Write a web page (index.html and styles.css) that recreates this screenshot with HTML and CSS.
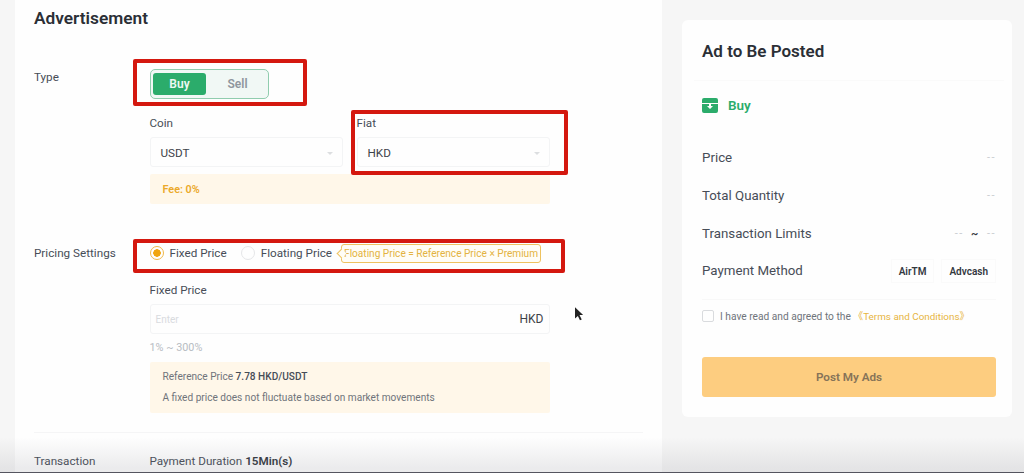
FILE: index.html
```html
<!DOCTYPE html>
<html lang="en">
<head>
<meta charset="utf-8">
<title>Post Ad</title>
<link rel="stylesheet" href="styles.css">
</head>
<body>
<div class="page">
  <main class="panel">
    <h1 class="panel-title">Advertisement</h1>
    <section class="row row-type">
      <div class="row-label">Type</div>
      <div class="row-body">
        <div class="toggle">
          <span class="toggle-on">Buy</span>
          <span class="toggle-off">Sell</span>
        </div>
        <div class="selects">
          <div class="field">
            <div class="field-label">Coin</div>
            <div class="select"><span>USDT</span><i class="caret"></i></div>
          </div>
          <div class="field">
            <div class="field-label">Fiat</div>
            <div class="select"><span>HKD</span><i class="caret"></i></div>
          </div>
        </div>
        <div class="notice notice-fee">Fee: 0%</div>
      </div>
    </section>
    <section class="row row-pricing">
      <div class="row-label">Pricing Settings</div>
      <div class="row-body">
        <div class="radios">
          <span class="radio radio-on"></span><span class="radio-text">Fixed Price</span>
          <span class="radio"></span><span class="radio-text radio-text-last">Floating Price</span>
          <span class="hint">Floating Price = Reference Price × Premium</span>
        </div>
        <div class="field-label field-label-price">Fixed Price</div>
        <div class="input"><span class="placeholder">Enter</span><span class="unit">HKD</span></div>
        <div class="range">1% ~ 300%</div>
        <div class="notice notice-ref">
          <div>Reference Price <b>7.78 HKD/USDT</b></div>
          <div>A fixed price does not fluctuate based on market movements</div>
        </div>
      </div>
    </section>
    <section class="row row-transaction">
      <div class="row-label">Transaction</div>
      <div class="row-body">Payment Duration <b>15Min(s)</b></div>
    </section>
  </main>
  <aside class="card">
    <h2 class="card-title">Ad to Be Posted</h2>
    <div class="side">
      <svg class="side-icon" viewBox="0 0 16 15" aria-hidden="true"><path fill="#2bac6b" d="M2 0h12a2 2 0 0 1 2 2v3H0V2a2 2 0 0 1 2-2zM0 6h16v7a2 2 0 0 1-2 2H2a2 2 0 0 1-2-2z"/><path fill="#fff" d="M7 5h2v3h2l-3 3-3-3h2z"/></svg>
      <span>Buy</span>
    </div>
    <div class="line"><span>Price</span><span class="dash">--</span></div>
    <div class="line"><span>Total Quantity</span><span class="dash">--</span></div>
    <div class="line"><span>Transaction Limits</span><span class="dash">-- <b>~</b> --</span></div>
    <div class="line line-pay">
      <span>Payment Method</span>
      <span class="tags"><span class="tag">AirTM</span><span class="tag">Advcash</span></span>
    </div>
    <label class="agree">
      <span class="check"></span>
      <span>I have read and agreed to the <span class="terms">《Terms and Conditions》</span></span>
    </label>
    <div class="post">Post My Ads</div>
  </aside>
</div>
<div class="mark mark-type"></div>
<div class="mark mark-fiat"></div>
<div class="mark mark-pricing"></div>
<svg class="cursor" viewBox="0 0 10 15" aria-hidden="true"><path fill="#222" d="M0 0l9 8.500-4 .2 2.500 4.800-2 1-2.300-4.900L0 12.500z"/></svg>
<div class="shade"></div>
</body>
</html>
```
FILE: styles.css
```css
* { box-sizing: border-box; }
html, body { margin: 0; height: 100%; overflow: hidden; }
body {
  position: relative;
  background: #f6f6f6;
  color: #474d57;
  font-family: Roboto, "Noto Sans CJK SC", "Liberation Sans", sans-serif;
  font-size: 11.700px;
}
b { font-weight: 600; color: #33383f; }
.page { display: flex; align-items: flex-start; padding-left: 15px; height: 473px; }

.panel {
  width: 647px;
  height: 473px;
  flex: none;
  background: #fefefe;
  padding: 0 19px;
  overflow: hidden;
}
.panel-title {
  margin: 8px 0 0;
  font-size: 17.300px;
  line-height: 20px;
  font-weight: 600;
  color: #2b2f36;
}
.row { display: flex; }
.row-label { width: 115.500px; flex: none; line-height: 16px; }
.row-body { width: 400px; }
.row-type { margin-top: 41px; }
.row-pricing { margin-top: 41px; }

.toggle {
  display: flex;
  align-items: center;
  width: 119px;
  height: 30px;
  padding: 2px;
  border: 1px solid #90cdae;
  border-radius: 5px;
  background: #f1f8f5;
  font-weight: 600;
  font-size: 12px;
}
.toggle-on {
  width: 53px;
  height: 22px;
  padding-left: 1px;
  line-height: 22px;
  text-align: center;
  border-radius: 3px;
  background: #2bac6b;
  color: #eef8f3;
}
.toggle-off { flex: 1; padding-left: 4px; text-align: center; color: #8f969e; }

.selects { display: flex; gap: 14px; margin-top: 15px; }
.field { flex: 1; }
.field-label { line-height: 18px; margin-bottom: 5px; }
.select, .input {
  display: flex;
  align-items: center;
  justify-content: space-between;
  height: 30px;
  border: 1px solid #f3f4f5;
  border-radius: 3px;
  padding: 2px 9px 0 10px;
  color: #3d4249;
}
.caret {
  width: 0;
  height: 0;
  border: 3px solid transparent;
  border-top: 3px solid #dcdee0;
  border-bottom: 0;
}
.notice { background: #fff7e9; border-radius: 2px; }
.notice-fee {
  height: 30px;
  margin-top: 7px;
  padding: 1px 13px 0;
  line-height: 29px;
  font-size: 10.800px;
  font-weight: 600;
  color: #eba92a;
}

.radios { display: flex; align-items: center; height: 16px; }
.radio {
  width: 14px;
  height: 14px;
  border: 1px solid #e5e6e8;
  border-radius: 50%;
  flex: none;
}
.radio-on { border-color: #efb84a; background: radial-gradient(circle, #f0a50f 0 3.500px, #fff 4px); }
.radio-text { margin: 0 14px 0 6px; }
.radio-text-last { margin-right: 9px; }
.hint {
  position: relative;
  height: 19px;
  line-height: 17px;
  padding: 0 2px;
  border: 1px solid #eec25f;
  border-radius: 3px;
  background: #fffdf6;
  color: #e3b341;
  font-size: 10.100px;
  white-space: nowrap;
}
.hint::before {
  content: "";
  position: absolute;
  left: -4px;
  top: 5px;
  width: 6px;
  height: 6px;
  border-left: 1px solid #eec25f;
  border-bottom: 1px solid #eec25f;
  background: #fffdf6;
  transform: rotate(45deg);
}
.field-label-price { margin-top: 20px; }
.input { padding: 0 5px 0 5px; }
.placeholder { color: #d9dbde; font-size: 10px; }
.unit { font-size: 12px; }
.range { margin-top: 7px; font-size: 10.800px; line-height: 13px; color: #b7bcc2; }
.notice-ref {
  height: 51px;
  margin-top: 8px;
  padding: 4px 13px 0;
  font-size: 10.100px;
  line-height: 21px;
  color: #6f747b;
}
.notice-ref b { font-weight: 500; color: #474d57; }
.row-transaction {
  margin-top: 19px;
  padding-top: 20px;
  border-top: 1px solid #f5f5f6;
  line-height: 16px;
}

.card {
  width: 330px;
  height: 397px;
  flex: none;
  margin: 20px 0 0 20px;
  padding: 0 16px 0 20px;
  background: #fefefe;
  border-radius: 6px;
}
.card-title {
  margin: 0 -8px;
  padding: 21px 8px 0;
  height: 61px;
  font-size: 17px;
  line-height: 20px;
  font-weight: 600;
  color: #2b2f36;
  border-bottom: 1px solid #fafafa;
}
.side {
  display: flex;
  align-items: center;
  gap: 10px;
  margin-top: 14px;
  height: 20px;
  font-size: 13.500px;
  font-weight: 600;
  color: #2bac6b;
}
.side-icon { width: 16px; height: 15px; }
.line {
  display: flex;
  justify-content: space-between;
  align-items: center;
  height: 20px;
  margin-top: 18px;
  font-size: 13.300px;
}
.side + .line { margin-top: 32px; }
.dash { font-size: 11px; letter-spacing: 1.500px; word-spacing: 3px; color: #c9ccd0; }
.dash b { color: #33383f; }
.line-pay { margin-top: 17px; margin-bottom: 19px; }
.tags { display: flex; gap: 7px; padding-top: 2px; }
.tag {
  height: 24px;
  line-height: 24px;
  padding: 0 7px;
  border: 1px solid #fafafa;
  font-size: 10px;
  font-weight: 600;
  color: #33383f;
}
.agree {
  display: flex;
  align-items: center;
  gap: 6px;
  padding-top: 9px;
  border-top: 1px solid #f8f8f8;
  font-size: 10.200px;
  color: #6f747b;
}
.check {
  width: 12px;
  height: 12px;
  border: 1px solid #d9dbde;
  border-radius: 2px;
}
.terms { font-size: 9.900px; color: #e7b53f; }
.post {
  height: 40px;
  margin-top: 34px;
  line-height: 40px;
  text-align: center;
  border-radius: 3px;
  background: #fdcd80;
  color: #867358;
  font-size: 11.700px;
  font-weight: 600;
}

.mark { position: absolute; border: 4px solid #d4180f; border-radius: 2px; }
.mark-type { left: 133px; top: 59px; width: 174px; height: 47px; }
.mark-fiat { left: 351px; top: 110px; width: 217px; height: 65px; }
.mark-pricing { left: 133px; top: 239px; width: 432px; height: 34px; }
.cursor { position: absolute; left: 575px; top: 307px; width: 9px; height: 14px; }
.shade {
  position: absolute;
  left: 0;
  right: 0;
  bottom: 0;
  height: 36px;
  background: linear-gradient(rgba(120,120,130,0), rgba(120,120,130,.14) 88%);
  border-bottom: 1px solid #55555f;
}
```
